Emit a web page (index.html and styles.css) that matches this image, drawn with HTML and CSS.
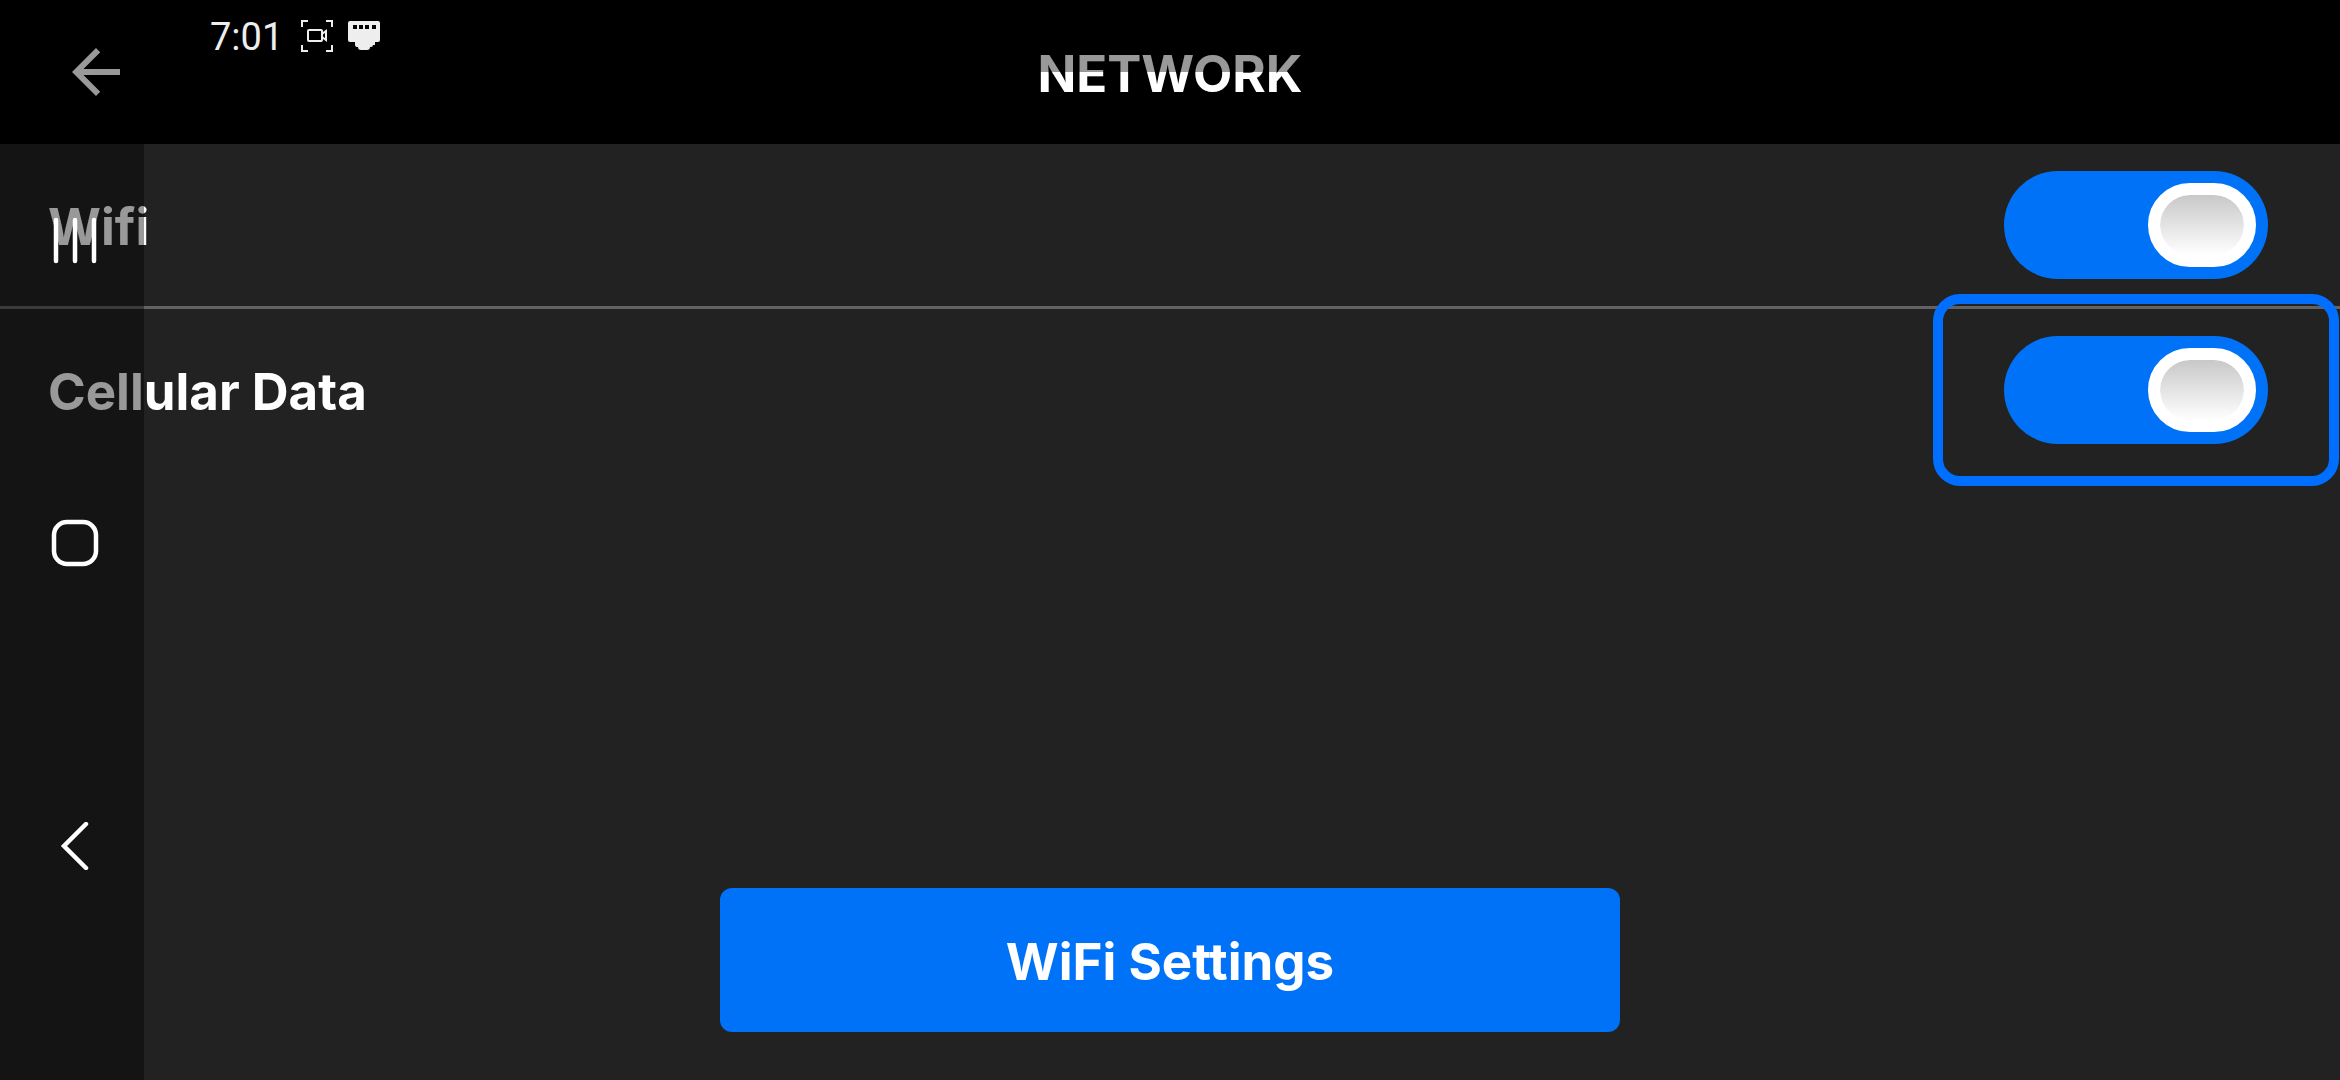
FILE: index.html
```html
<!DOCTYPE html>
<html lang="en">
<head>
  <meta charset="UTF-8">
  <meta name="viewport" content="width=device-width, initial-scale=1.0">
  <title>Network</title>
  <link rel="stylesheet" href="styles.css">
</head>
<body>
  <div class="screen">
    <header class="header">
      <button type="button" class="back-button" aria-label="Back">
        <svg viewBox="4 4 16 16" width="48" height="48"><path fill="#fff" d="M20 11H7.83l5.59-5.59L12 4l-8 8 8 8 1.41-1.41L7.83 13H20v-2z"/></svg>
      </button>
      <h1>NETWORK</h1>
    </header>
    <main>
      <div class="setting">
        <label for="wifi">Wifi</label>
        <span class="toggle-wrap">
          <input type="checkbox" id="wifi" class="toggle" checked>
        </span>
      </div>
      <div class="setting">
        <label for="cellular">Cellular Data</label>
        <span class="toggle-wrap focused">
          <input type="checkbox" id="cellular" class="toggle" checked>
        </span>
      </div>
    </main>
    <footer class="footer">
      <button type="button" class="settings-button">WiFi Settings</button>
    </footer>
  </div>

  <!-- system bars lie over the app -->
  <div class="status-bar">
    <span class="time">7:01</span>
    <svg viewBox="0 0 32 32" width="32" height="32" fill="none" stroke="#eee" stroke-width="2">
      <path d="M1 7V1h6M25 1h6v6M31 25v6h-6M7 31H1v-6"/>
      <rect x="7" y="10" width="14" height="11" rx="1"/>
      <path d="M21 14l4-3v9l-4-3"/>
    </svg>
    <svg viewBox="0 0 34 32" width="34" height="32">
      <path fill="#eee" d="M3 1h28q2 0 2 2v17q0 2-2 2h-3v3h-2q0 2-2 2h-1q0 3-3 3h-6q-3 0-3-3h-1q-2 0-2-2H8v-3H3q-2 0-2-2V3q0-2 2-2z"/>
      <path fill="#000" d="M6 5h4v4H6zM12 5h4v4h-4zM18 5h4v4h-4zM25 5h4v4h-4z"/>
    </svg>
  </div>
  <nav class="nav-bar">
    <button type="button" aria-label="Recent apps">
      <svg viewBox="0 0 48 48" width="48" height="48" stroke="#fff" stroke-width="4.500" stroke-linecap="round"><path d="M5 4v41M24 4v41M43 4v41"/></svg>
    </button>
    <button type="button" aria-label="Home">
      <svg viewBox="0 0 48 48" width="48" height="48" fill="none" stroke="#fff" stroke-width="4.500"><rect x="3" y="3" width="42" height="42" rx="13"/></svg>
    </button>
    <button type="button" aria-label="Back">
      <svg viewBox="0 0 48 48" width="48" height="48" fill="none" stroke="#fff" stroke-width="4.500" stroke-linecap="round"><path d="M35 2L13 24l22 22"/></svg>
    </button>
  </nav>
</body>
</html>
```

FILE: styles.css
```css
*, *::before, *::after {
  box-sizing: border-box;
}
body {
  margin: 0;
  background-color: #222;
  color: #fff;
  font-family: Inter, "Liberation Sans", Arial, sans-serif;
  font-size: 51px;
  font-weight: bold;
}
button {
  padding: 0;
  border: none;
  background: none;
  color: inherit;
  font: inherit;
  cursor: pointer;
}
svg {
  display: block;
}
.screen {
  display: flex;
  flex-direction: column;
  min-height: 100vh;
}
.header {
  display: grid;
  grid-template-columns: 1fr auto 1fr;
  align-items: center;
  height: 144px;
  padding: 0 72px;
  background-color: #000;
}
.back-button {
  justify-self: start;
}
.header h1 {
  margin: 0;
  font-size: 51px;
}
.header h1, .setting label, .settings-button, .time {
  padding-top: 2px;
}
main {
  flex: 1;
}
.setting {
  display: flex;
  align-items: center;
  justify-content: space-between;
  height: 162px;
  padding: 0 72px 0 48px;
}
.setting + .setting {
  height: 165px;
  border-top: 3px solid #626262;
}
.toggle-wrap {
  position: relative;
  display: flex;
}
.toggle {
  display: flex;
  justify-content: flex-end;
  appearance: none;
  width: 264px;
  height: 108px;
  margin: 0;
  padding: 12px;
  border-radius: 54px;
  background-color: #0072f8;
  outline: none;
  cursor: pointer;
}
.toggle::before {
  content: "";
  width: 108px;
  height: 84px;
  border: 12px solid #fff;
  border-radius: 42px;
  background: linear-gradient(#c8c8c8, #fff) padding-box, linear-gradient(#fff, #fff) border-box;
}
.toggle:not(:checked) {
  justify-content: flex-start;
  background-color: #626262;
}
/* focus ring */
.focused::after {
  content: "";
  position: absolute;
  inset: -42px -71px;
  border: 10px solid #006eff;
  border-radius: 27px;
  pointer-events: none;
}
.footer {
  display: flex;
  justify-content: center;
  padding-bottom: 48px;
}
.settings-button {
  width: 900px;
  max-width: 90%;
  height: 144px;
  border-radius: 12px;
  background-color: #0072f8;
}
.status-bar {
  position: absolute;
  top: 0;
  left: 144px;
  right: 0;
  display: flex;
  align-items: center;
  gap: 14px;
  height: 72px;
  padding-left: 66px;
  background-color: rgba(0, 0, 0, 0.4);
}
.time {
  margin-right: 4px;
  color: #eee;
  font-family: Roboto, sans-serif;
  font-size: 38px;
  font-weight: normal;
}
.nav-bar {
  position: absolute;
  top: 0;
  bottom: 0;
  left: 0;
  display: flex;
  flex-direction: column;
  align-items: center;
  justify-content: space-between;
  width: 144px;
  padding: 216px 0 210px 6px;
  background-color: rgba(0, 0, 0, 0.4);
}
```
